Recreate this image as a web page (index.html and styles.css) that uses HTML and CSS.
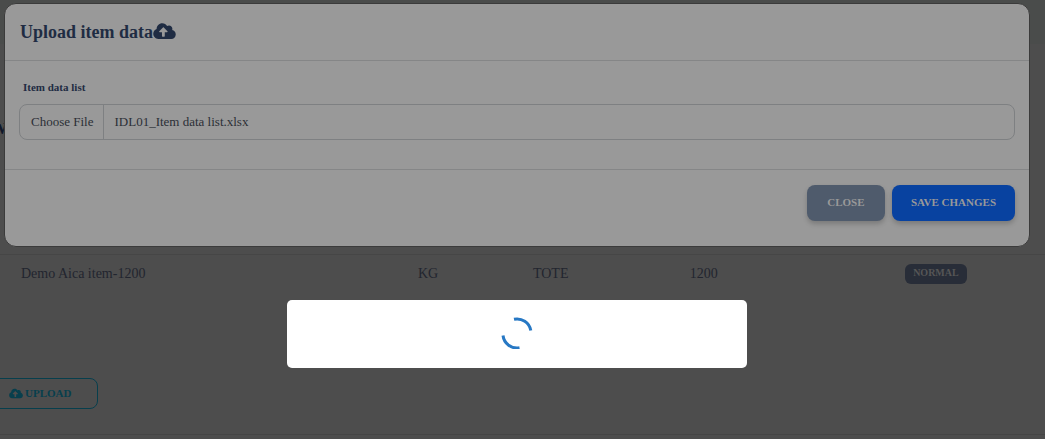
FILE: index.html
```html
<!DOCTYPE html>
<html lang="en">
<head>
<meta charset="utf-8">
<title>Upload item data</title>
<link rel="stylesheet" href="styles.css">
</head>
<body>
<svg class="sprite" aria-hidden="true">
  <symbol id="cloud-upload" viewBox="0 0 640 512">
    <path fill="currentColor" d="M537.600 226.600c4.100-10.700 6.400-22.400 6.400-34.600 0-53-43-96-96-96-19.700 0-38.100 6-53.300 16.200C367 64.200 315.300 32 256 32c-88.400 0-160 71.600-160 160 0 2.700.1 5.400.2 8.100C40.200 219.800 0 273.200 0 336c0 79.500 64.500 144 144 144h368c70.700 0 128-57.300 128-128 0-61.900-44-113.600-102.400-125.400zM393.400 288H328v112c0 8.800-7.200 16-16 16h-48c-8.800 0-16-7.200-16-16V288h-65.400c-14.300 0-21.400-17.200-11.300-27.300l105.400-105.400c6.200-6.200 16.400-6.200 22.600 0l105.400 105.400c10.100 10.100 2.900 27.300-11.300 27.300z"/>
  </symbol>
</svg>

<main class="page">
  <div class="page-top"></div>
  <div class="page-heading">W</div>
  <table class="items">
    <tbody>
      <tr>
        <td class="col-name">Demo Aica item-1200</td>
        <td class="col-unit">KG</td>
        <td class="col-pack">TOTE</td>
        <td class="col-qty">1200</td>
        <td class="col-state"><span class="badge">NORMAL</span></td>
      </tr>
    </tbody>
  </table>
  <div class="page-actions">
    <button class="btn-upload" type="button"><svg class="icon-small"><use href="#cloud-upload"/></svg>UPLOAD</button>
  </div>
</main>

<form class="modal" role="dialog" aria-labelledby="modal-title">
  <header class="modal-header">
    <h1 class="modal-title" id="modal-title">Upload item data</h1>
    <svg class="icon-large"><use href="#cloud-upload"/></svg>
  </header>
  <div class="modal-body">
    <label class="field-label" for="item-file">Item data list</label>
    <div class="file-field">
      <span class="file-button">Choose File</span>
      <span class="file-name">IDL01_Item data list.xlsx</span>
      <input class="file-input" id="item-file" type="file">
    </div>
  </div>
  <footer class="modal-footer">
    <button class="btn btn-close" type="button">CLOSE</button>
    <button class="btn btn-save" type="button">SAVE CHANGES</button>
  </footer>
</form>

<div class="loader" role="status" aria-label="Loading">
  <svg class="spinner" viewBox="0 0 32 32">
    <path d="M13 2.300A14 14 0 0 1 29.800 13.500M2 18.500A14.200 14.200 0 0 0 18.500 30.800"/>
  </svg>
</div>
</body>
</html>
```
FILE: styles.css
```css
* { box-sizing: border-box; }

body {
  margin: 0;
  min-height: 100vh;
  overflow: hidden;
  background: #4d4d4d;
  color: #22252f;
  font-family: "Liberation Serif", "Times New Roman", serif;
  font-size: 14px;
}

button, input { font-family: inherit; }

.sprite { position: absolute; width: 0; height: 0; }

.page { display: flex; flex-direction: column; }
.page-top { height: 44px; background: #4a4c4b; }
.page-heading {
  height: 210px;
  padding-top: 76px;
  margin-left: -9px;
  color: #10182a;
  font-size: 16px;
  font-weight: bold;
  line-height: 18px;
}

.items {
  width: 100%;
  table-layout: fixed;
  border-collapse: collapse;
  border-top: 1px solid #464646;
}
.items td { height: 37px; padding: 1px 0 0; line-height: 20px; }
.items .col-name { width: 40%; padding-left: 21px; }
.col-unit { width: 11%; }
.items .col-pack { width: 15%; }
.col-qty { width: 21%; }
.items .col-state { padding: 0; }
.badge {
  display: inline-block;
  height: 20px;
  margin-left: -4px;
  padding: 0 8px;
  border-radius: 6px;
  background: #282d38;
  color: #565656;
  font-size: 10px;
  font-weight: bold;
  line-height: 18px;
  vertical-align: middle;
}

.page-actions { padding-top: 86px; height: 143px; border-bottom: 1px solid #454545; }
.btn-upload {
  display: flex;
  align-items: center;
  gap: 2px;
  height: 31px;
  margin-left: -20px;
  padding: 0 26px 0 28px;
  border: 1px solid #073f4d;
  border-radius: 8px;
  background: transparent;
  color: #073f4d;
  font-size: 11px;
  font-weight: bold;
}
.icon-small { width: 14px; height: 11px; }
.icon-large { width: 23px; height: 18px; }

.modal {
  position: absolute;
  top: 3px;
  left: 4px;
  right: 15px;
  border: 1px solid #3b3b3b;
  border-radius: 12px;
  background: #999;
}
.modal-header {
  display: flex;
  align-items: center;
  height: 57px;
  padding: 0 15px 2px;
  border-bottom: 1px solid #858687;
  color: #1f2c43;
}
.modal-title { margin: 0; padding-top: 2px; font-size: 18px; line-height: 24px; }
.modal-body { padding: 16px 14px 29px; }
.field-label {
  display: block;
  margin: 0 4px 6px;
  color: #1f2c43;
  font-size: 11px;
  font-weight: bold;
  line-height: 21px;
}
.file-field {
  position: relative;
  display: flex;
  height: 36px;
  border: 1px solid #7e8082;
  border-radius: 8px;
  color: #2b2f36;
  font-size: 13px;
  line-height: 34px;
}
.file-button { padding: 0 10px 0 11px; border-right: 1px solid #7e8082; }
.file-name { padding: 0 10px; }
.file-input { position: absolute; inset: 0; width: 100%; opacity: 0; }
.modal-footer {
  display: flex;
  justify-content: flex-end;
  gap: 7px;
  padding: 15px 14px 25px;
  border-top: 1px solid #858687;
}
.btn {
  min-width: 78px;
  height: 36px;
  padding: 0 19px 2px;
  border: 0;
  border-radius: 8px;
  color: #999;
  font-size: 11px;
  font-weight: bold;
  box-shadow: 0 3px 5px rgba(0, 0, 0, .2);
}
.btn-close { background: #4f5b6c; }
.btn-save { background: #0842a0; }

.loader {
  position: absolute;
  top: 300px;
  left: 287px;
  right: 298px;
  display: flex;
  justify-content: center;
  padding: 17px 0 19px;
  border-radius: 5px;
  background: #fff;
}
.spinner {
  width: 32px;
  height: 32px;
  fill: none;
  stroke: #2778c4;
  stroke-width: 3;
}
```
